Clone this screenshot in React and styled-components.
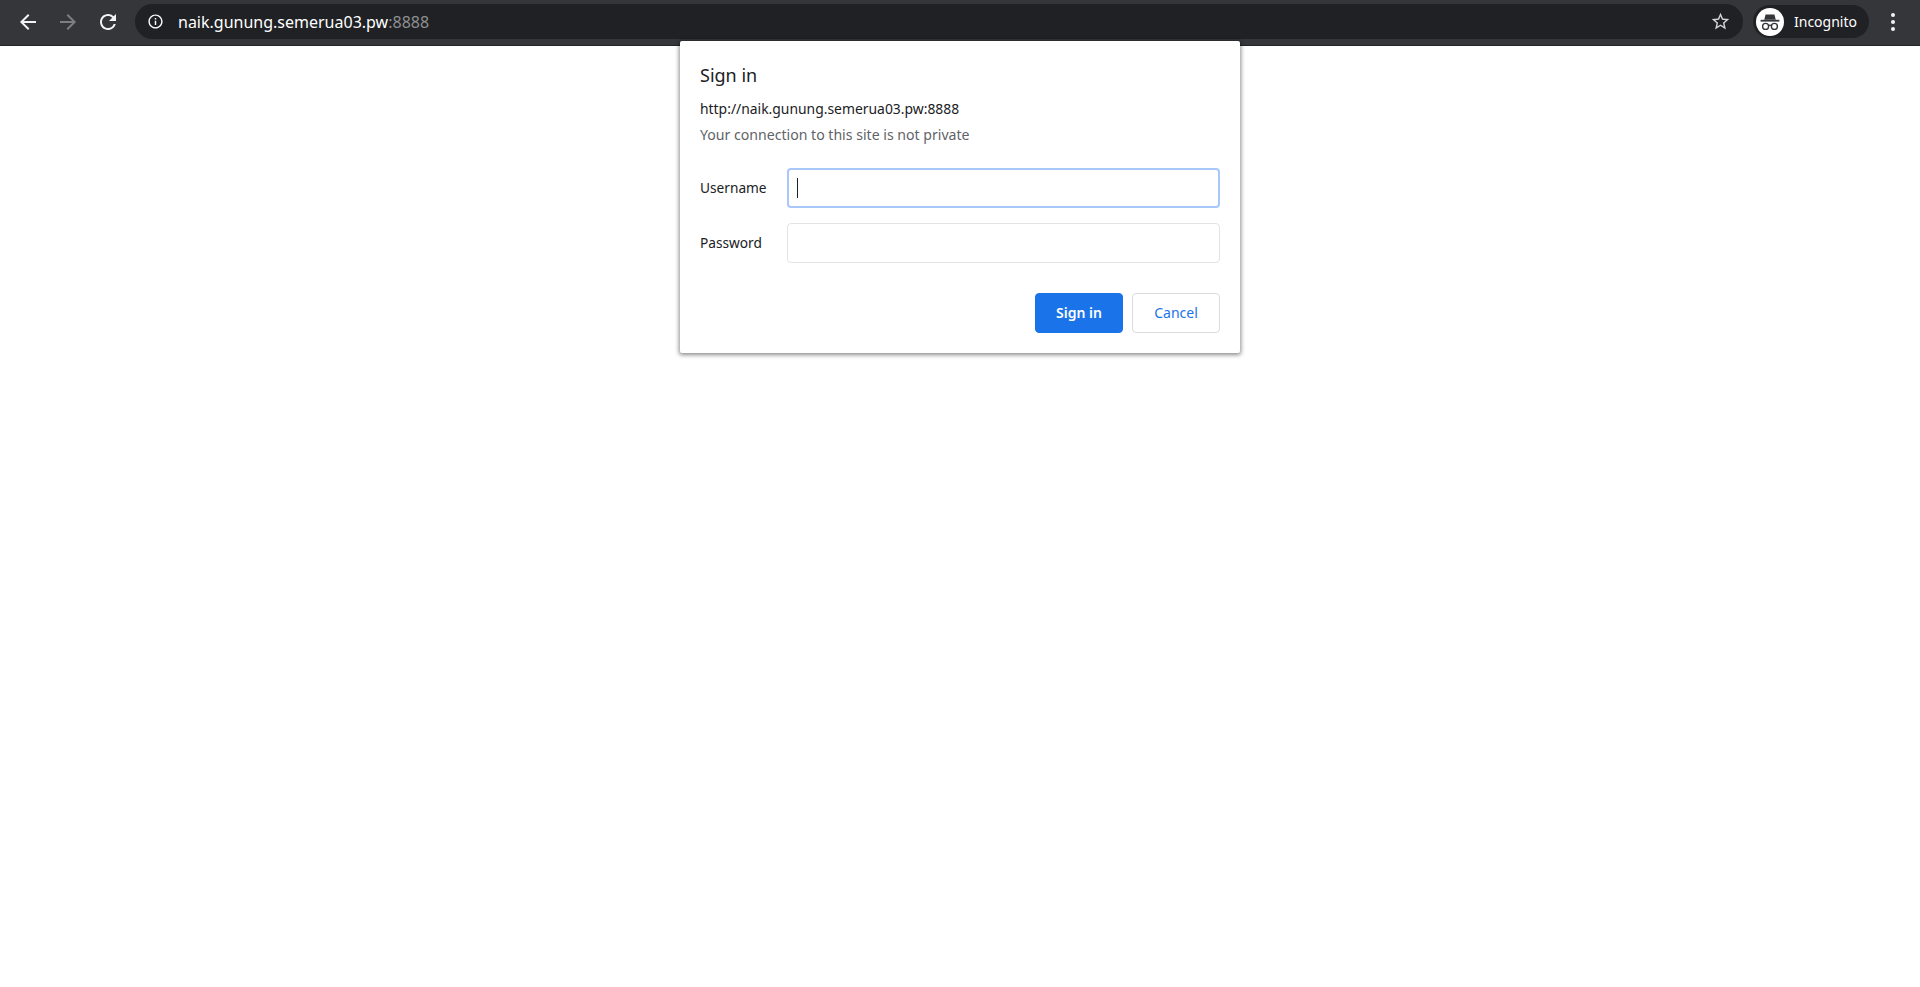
import styled, { createGlobalStyle } from 'styled-components';

const GlobalStyle = createGlobalStyle`
  html, body {
    margin: 0;
    padding: 0;
    height: 100%;
    background: #fff;
    font-family: 'Noto Sans', 'Open Sans', sans-serif;
  }
  * { box-sizing: border-box; }
`;

const paths = {
  back: 'M20 11H7.83l5.59-5.59L12 4l-8 8 8 8 1.41-1.41L7.83 13H20v-2z',
  forward: 'M4 11h12.17l-5.59-5.59L12 4l8 8-8 8-1.41-1.41L16.17 13H4v-2z',
  reload: 'M17.65 6.35A7.958 7.958 0 0012 4c-4.42 0-7.99 3.58-7.99 8s3.57 8 7.99 8c3.73 0 6.84-2.55 7.73-6h-2.08A5.99 5.99 0 0112 18c-3.31 0-6-2.69-6-6s2.69-6 6-6c1.66 0 3.14.69 4.22 1.78L13 11h7V4l-2.35 2.35z',
  info: 'M11 7h2v2h-2zm0 4h2v6h-2zm1-9C6.48 2 2 6.48 2 12s4.48 10 10 10 10-4.48 10-10S17.52 2 12 2zm0 18c-4.41 0-8-3.59-8-8s3.59-8 8-8 8 3.59 8 8-3.59 8-8 8z',
  star: 'M22 9.24l-7.19-.62L12 2 9.19 8.63 2 9.24l5.46 4.73L5.82 21 12 17.27 18.18 21l-1.63-7.03L22 9.24zM12 15.4l-3.76 2.27 1-4.28-3.32-2.88 4.38-.38L12 6.1l1.71 4.04 4.38.38-3.32 2.88 1 4.28L12 15.4z',
};

function Icon({ name, size = 24, color = 'currentColor' }) {
  return (
    <svg width={size} height={size} viewBox="0 0 24 24" fill={color}>
      <path d={paths[name]} />
    </svg>
  );
}

function IncognitoIcon() {
  return (
    <svg width="28" height="28" viewBox="0 0 28 28">
      <circle cx="14" cy="14" r="14" fill="#fff" />
      <path d="M9.6 6.5h8.8l1.4 5.2H8.2z" fill="#35363a" />
      <rect x="4.6" y="11.8" width="18.8" height="1.8" fill="#35363a" />
      <circle cx="9.6" cy="18.4" r="3" fill="none" stroke="#35363a" strokeWidth="1.4" />
      <circle cx="18.4" cy="18.4" r="3" fill="none" stroke="#35363a" strokeWidth="1.4" />
      <path d="M12.4 17.6c1-.6 2.2-.6 3.2 0" fill="none" stroke="#35363a" strokeWidth="1.3" />
    </svg>
  );
}

export default function App() {
  return (
    <Page>
      <GlobalStyle />
      <Toolbar>
        <NavButton><Icon name="back" /></NavButton>
        <NavButton $disabled><Icon name="forward" /></NavButton>
        <NavButton><Icon name="reload" /></NavButton>
        <Omnibox>
          <Icon name="info" size={17} color="#fff" />
          <Url>naik.gunung.semerua03.pw<Port>:8888</Port></Url>
          <Spacer />
          <Icon name="star" size={21} color="#d5d6d8" />
        </Omnibox>
        <Profile>
          <IncognitoIcon />
          <span>Incognito</span>
        </Profile>
        <Menu><i /><i /><i /></Menu>
      </Toolbar>

      <Dialog>
        <Title>Sign in</Title>
        <Origin>http://naik.gunung.semerua03.pw:8888</Origin>
        <Note>Your connection to this site is not private</Note>
        <Fields>
          <Label>Username</Label>
          <Field $focused>
            <Caret />
          </Field>
          <Label>Password</Label>
          <Field />
        </Fields>
        <Actions>
          <Button $primary>Sign in</Button>
          <Button>Cancel</Button>
        </Actions>
      </Dialog>
    </Page>
  );
}

const Page = styled.div`
  min-height: 100vh;
  background: #fff;
`;

const Toolbar = styled.header`
  height: 46px;
  padding: 4px 0 6px 8px;
  display: flex;
  align-items: center;
  background: #35363a;
  border-bottom: 1px solid #232427;
`;

const NavButton = styled.div`
  width: 40px;
  height: 34px;
  display: flex;
  align-items: center;
  justify-content: center;
  color: ${(p) => (p.$disabled ? '#7d7e80' : '#f1f3f4')};
`;

const Omnibox = styled.div`
  width: 1608px;
  height: 35px;
  margin-left: 7px;
  padding: 0 12px;
  display: flex;
  align-items: center;
  border-radius: 18px;
  background: #202124;
`;

const Url = styled.span`
  margin-left: 14px;
  color: #fff;
  font-size: 16px;
`;

const Port = styled.span`
  color: #8e8f91;
`;

const Spacer = styled.div`
  flex: 1;
`;

const Profile = styled.div`
  width: 116px;
  height: 33px;
  margin-left: 10px;
  padding-left: 3px;
  display: flex;
  align-items: center;
  gap: 10px;
  border-radius: 17px;
  background: #202124;
  color: #fff;
  font-size: 14px;
`;

const Menu = styled.div`
  width: 48px;
  display: flex;
  flex-direction: column;
  align-items: center;
  gap: 3px;

  i {
    width: 4px;
    height: 4px;
    border-radius: 50%;
    background: #f1f3f4;
  }
`;

const Dialog = styled.section`
  position: absolute;
  top: 41px;
  left: 680px;
  width: 560px;
  padding: 22px 20px 20px 20px;
  background: #fff;
  border-radius: 2px;
  box-shadow: 0 1px 4px 1px rgba(0, 0, 0, 0.45);
`;

const Title = styled.h1`
  margin: 0;
  color: #202124;
  font-size: 18px;
  font-weight: 400;
  line-height: 24px;
`;

const Origin = styled.div`
  margin-top: 12px;
  color: #202124;
  font-size: 13.9px;
  line-height: 20px;
`;

const Note = styled.div`
  margin-top: 6px;
  color: #5f6368;
  font-size: 14.1px;
  line-height: 20px;
`;

const Fields = styled.div`
  margin-top: 23px;
  display: grid;
  grid-template-columns: 87px 1fr;
  row-gap: 15px;
  align-items: center;
`;

const Label = styled.label`
  margin-bottom: 2px;
  color: #202124;
  font-size: 13.7px;
`;

const Field = styled.div`
  height: 40px;
  padding: 0 8px;
  display: flex;
  align-items: center;
  border-radius: 4px;
  background: #fff;
  border: 1px solid #e1e3e6;
  ${(p) => p.$focused && 'border: 2px solid #a8c7fa;'}
`;

const Caret = styled.div`
  width: 1px;
  height: 20px;
  background: #202124;
`;

const Actions = styled.div`
  margin-top: 30px;
  display: flex;
  justify-content: flex-end;
  gap: 9px;
`;

const Button = styled.button`
  width: 88px;
  height: 40px;
  padding: 0 0 2px;
  border-radius: 4px;
  font-family: inherit;
  font-size: 14px;
  font-weight: ${(p) => (p.$primary ? 600 : 400)};
  color: ${(p) => (p.$primary ? '#fff' : '#1a73e8')};
  background: ${(p) => (p.$primary ? '#1a73e8' : '#fff')};
  border: 1px solid ${(p) => (p.$primary ? '#1a73e8' : '#dadce0')};
`;
